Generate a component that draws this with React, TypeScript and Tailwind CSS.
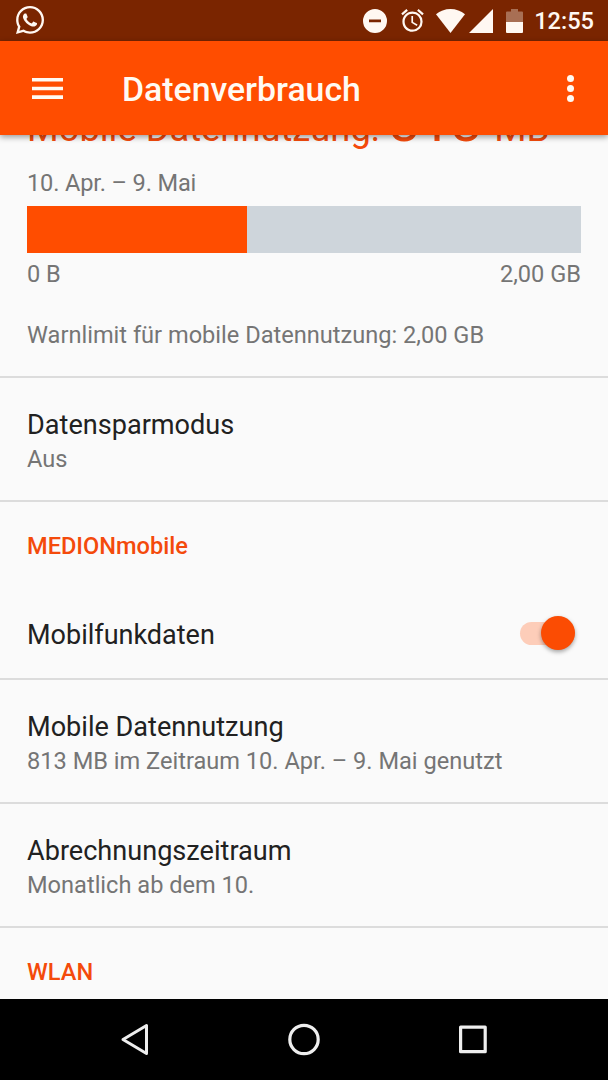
import type { ReactNode } from 'react';
import { FaWhatsapp } from 'react-icons/fa';
import { MdAlarm } from 'react-icons/md';

const StatusBar = () => {
  return (
    <div className="flex h-[41px] shrink-0 items-center bg-[#7a2500] text-[#fff8f2]">
      <FaWhatsapp className="mt-[-1px] ml-[14px] h-[32px] w-[32px]" />
      <svg className="ml-auto h-6 w-6" viewBox="0 0 24 24" fill="currentColor">
        <path d="M12 0a12 12 0 1 0 0 24 12 12 0 0 0 0-24Zm6 13.200H6v-2.600h12Z" />
      </svg>
      <MdAlarm className="ml-[12px] h-[27px] w-[27px]" />
      <svg className="ml-[10px] h-6 w-[29px]" viewBox="0 0 29 24" fill="currentColor">
        <path d="M14.5 24 0 5.2C4 2 9 0 14.5 0S25 2 29 5.2Z" />
      </svg>
      <svg className="ml-1 h-6 w-6" viewBox="0 0 24 24" fill="currentColor">
        <path d="M24 0v24H0Z" />
      </svg>
      <svg className="ml-[13px] h-6 w-[17px]" viewBox="0 0 17 24" fill="currentColor">
        <path d="M5 0h7v2.4h4a1 1 0 0 1 1 1V13H0V3.4a1 1 0 0 1 1-1h4Z" opacity=".35" />
        <path d="M0 13h17v10a1 1 0 0 1-1 1H1a1 1 0 0 1-1-1Z" />
      </svg>
      <span className="mr-[14px] ml-[11px] text-[23.6px] leading-7 font-medium">12:55</span>
    </div>
  );
};

const Toolbar = () => {
  return (
    <header className="relative z-10 flex h-[94px] shrink-0 items-center bg-[#ff4d00] pr-[34px] pl-8 text-[#fffaf3] shadow-[0_2px_6px_rgba(0,0,0,0.4)]">
      <svg className="h-[21px] w-[31px]" viewBox="0 0 31 21" fill="currentColor">
        <path d="M0 0h31v3.600H0ZM0 8.700h31v3.600H0ZM0 17.300h31v3.600H0Z" />
      </svg>
      <h1 className="mt-1 ml-[59px] text-[33.8px] leading-10 font-medium">Datenverbrauch</h1>
      <div className="ml-auto flex flex-col gap-[3px]">
        <span className="h-[7px] w-[7px] rounded-full bg-current" />
        <span className="h-[7px] w-[7px] rounded-full bg-current" />
        <span className="h-[7px] w-[7px] rounded-full bg-current" />
      </div>
    </header>
  );
};

const Row = ({ title, summary }: { title: string; summary: string }) => {
  return (
    <div className="h-[124px] border-b-2 border-[#dcdcdc] px-[27px] pt-[31px]">
      <div className="text-[27.1px] leading-8 text-[#212121]">{title}</div>
      <div className="mt-1 text-[23.6px] leading-7 text-[#757575]">{summary}</div>
    </div>
  );
};

const Category = ({ children }: { children: ReactNode }) => {
  return <h2 className="px-[27px] pt-[30px] text-[23.6px] leading-7 font-medium text-[#f44a0b]">{children}</h2>;
};

const NavBar = () => {
  return (
    <nav className="flex h-[81px] shrink-0 items-center justify-center gap-[129px] bg-black text-[#eeeeee]">
      <svg className="h-10 w-10" viewBox="0 0 40 40" fill="none" stroke="currentColor" strokeWidth="3" strokeLinejoin="round">
        <path d="M31.500 5.500v28L8 19.500Z" />
      </svg>
      <svg className="h-10 w-10" viewBox="0 0 40 40" fill="none" stroke="currentColor" strokeWidth="3.200">
        <circle cx="20" cy="19.500" r="14.200" />
      </svg>
      <svg className="h-10 w-10" viewBox="0 0 40 40" fill="none" stroke="currentColor" strokeWidth="3.200" strokeLinejoin="round">
        <rect x="7.600" y="7.100" width="24.600" height="24.600" />
      </svg>
    </nav>
  );
};

const App = () => {
  return (
    <div className="flex h-[1080px] w-[608px] flex-col overflow-hidden bg-[#fafafa] font-['Roboto',sans-serif]">
      <StatusBar />
      <Toolbar />
      <main className="flex-1 overflow-hidden">
        <section className="flow-root h-[243px] border-b-2 border-[#dcdcdc] px-[27px] text-[23.6px] leading-7 text-[#757575]">
          {/* scrolled partly under the toolbar */}
          <div className="-mt-[44px] h-[78px] text-[36.3px] leading-[64px] whitespace-nowrap text-[#f44a0b]">
            Mobile Datennutzung: <span className="mr-[3px] text-[55.5px]">813</span> <span className="text-[37px]">MB</span>
          </div>
          <div className="tracking-[-0.15px]">10. Apr. – 9. Mai</div>
          <div className="mt-[9px] flex h-[47px] bg-[#ced5db]">
            <div className="w-[219.5px] bg-[#ff4d00]" />
          </div>
          <div className="mt-[7px] flex justify-between">
            <span>0 B</span>
            <span>2,00 GB</span>
          </div>
          <div className="mt-[33px]">Warnlimit für mobile Datennutzung: 2,00 GB</div>
        </section>

        <Row title="Datensparmodus" summary="Aus" />

        <Category>MEDIONmobile</Category>
        <div className="mt-[29px] flex h-[91px] items-center justify-between border-b-2 border-[#dcdcdc] pr-[33px] pl-[27px]">
          <span className="mt-[2px] text-[27px] leading-8 text-[#212121]">Mobilfunkdaten</span>
          <div className="mb-px flex h-[23px] w-[55px] items-center justify-end rounded-full bg-[#fdcdb9]">
            <span className="h-[34px] w-[34px] rounded-full bg-[#fb4c03] shadow-[0_2px_4px_rgba(0,0,0,0.35)]" />
          </div>
        </div>
        <Row title="Mobile Datennutzung" summary="813 MB im Zeitraum 10. Apr. – 9. Mai genutzt" />
        <Row title="Abrechnungszeitraum" summary="Monatlich ab dem 10." />

        <Category>WLAN</Category>
      </main>
      <NavBar />
    </div>
  );
};

export default App;
